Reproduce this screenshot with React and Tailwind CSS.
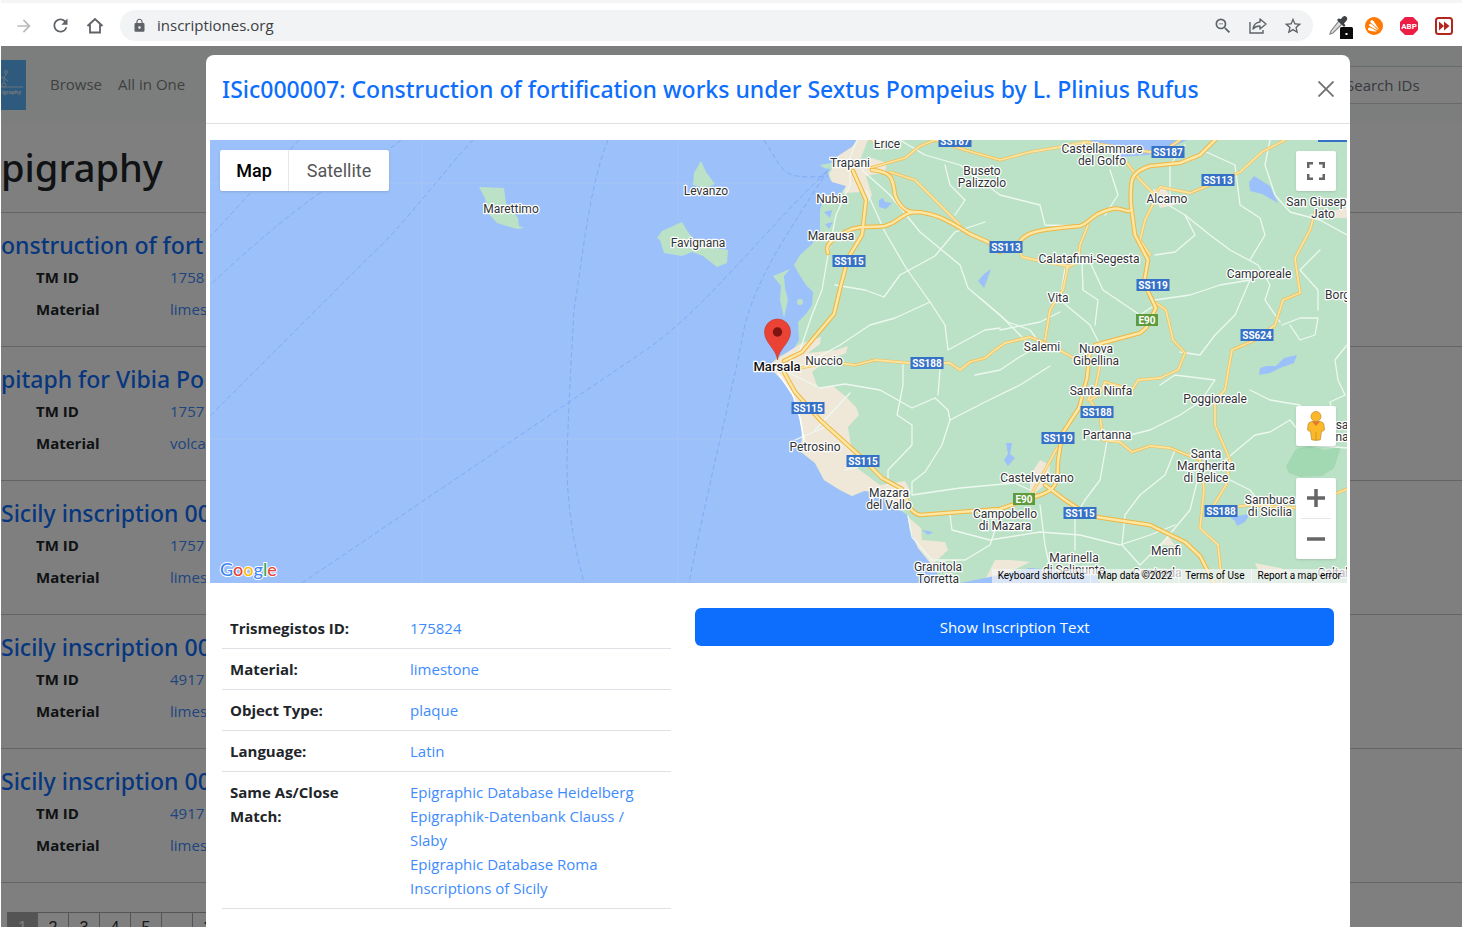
import { MdArrowForward, MdRefresh, MdLock, MdZoomOut, MdStarBorder } from 'react-icons/md';

const records = [
    { title: 'onstruction of fort', tm: '1758', material: 'limes' },
    { title: 'pitaph for Vibia Po', tm: '1757', material: 'volca' },
    { title: 'Sicily inscription 00', tm: '1757', material: 'limes' },
    { title: 'Sicily inscription 00', tm: '4917', material: 'limes' },
    { title: 'Sicily inscription 00', tm: '4917', material: 'limes' },
];

const details = [
    { label: 'Trismegistos ID:', links: ['175824'] },
    { label: 'Material:', links: ['limestone'] },
    { label: 'Object Type:', links: ['plaque'] },
    { label: 'Language:', links: ['Latin'] },
    {
        label: 'Same As/Close Match:',
        links: [
            'Epigraphic Database Heidelberg',
            'Epigraphik-Datenbank Clauss / Slaby',
            'Epigraphic Database Roma',
            'Inscriptions of Sicily',
        ],
    },
];

// map coordinates: x, y of the centre of the first line
const places = [
    [887, 144, 'Erice'],
    [850, 163, 'Trapani'],
    [706, 191, 'Levanzo'],
    [511, 209, 'Marettimo'],
    [832, 199, 'Nubia'],
    [831, 236, 'Marausa'],
    [698, 243, 'Favignana'],
    [982, 171, 'Buseto', 'Palizzolo'],
    [1102, 149, 'Castellammare', 'del Golfo'],
    [1167, 199, 'Alcamo'],
    [1323, 202, 'San Giuseppe', 'Jato'],
    [1089, 259, 'Calatafimi-Segesta'],
    [1259, 274, 'Camporeale'],
    [1341, 295, 'Borgo'],
    [1058, 298, 'Vita'],
    [1042, 347, 'Salemi'],
    [1096, 349, 'Nuova', 'Gibellina'],
    [824, 361, 'Nuccio'],
    [1101, 391, 'Santa Ninfa'],
    [1215, 399, 'Poggioreale'],
    [1107, 435, 'Partanna'],
    [815, 447, 'Petrosino'],
    [1206, 454, 'Santa', 'Margherita', 'di Belice'],
    [1037, 478, 'Castelvetrano'],
    [889, 493, 'Mazara', 'del Vallo'],
    [1005, 514, 'Campobello', 'di Mazara'],
    [1270, 500, 'Sambuca', 'di Sicilia'],
    [1342, 425, 'sa', 'na'],
    [1166, 551, 'Menfi'],
    [1074, 558, 'Marinella', 'di Selinunte'],
    [1157, 573, 'Contrada'],
    [938, 567, 'Granitola', 'Torretta'],
    [1338, 573, 'Caltabe'],
];

const shields = [
    [955, 141, 'SS187'],
    [1168, 152, 'SS187'],
    [1218, 180, 'SS113'],
    [1006, 247, 'SS113'],
    [849, 261, 'SS115'],
    [1153, 285, 'SS119'],
    [1147, 320, 'E90'],
    [1257, 335, 'SS624'],
    [927, 363, 'SS188'],
    [808, 408, 'SS115'],
    [863, 461, 'SS115'],
    [1097, 412, 'SS188'],
    [1058, 438, 'SS119'],
    [1024, 499, 'E90'],
    [1080, 513, 'SS115'],
    [1221, 511, 'SS188'],
];

const ferries = [
    'M299 140L209 238',
    'M401 140Q390 150 340 180T209 286',
    'M473 140C440 175 400 230 370 256L209 417',
    'M608 140C590 185 585 240 574 310C570 380 567 440 567 470C568 520 578 560 584 583',
    'M302 583L640 354C700 315 760 235 828 170',
    'M764 140C785 172 780 180 828 176',
    'M828 170C790 230 750 285 742 340C730 400 705 500 689 583',
];

const minorRoads = [
    'M857 140L850 158L850 185L836 215L828 255L822 290L812 315L800 350L786 360',
    'M862 170L890 195L920 232L960 265L968 288L1000 315L1025 340L1030 345',
    'M866 190L885 232L906 268L930 302L945 325L948 350L985 330L1000 328',
    'M930 302L895 318L870 325L840 345L800 367',
    'M835 285L865 290L884 297L900 275L935 256L955 232L985 222',
    'M895 137L925 155L960 165L1000 195L1040 205L1045 225L1080 226',
    'M945 165L950 185L965 200L955 215',
    'M1110 170L1118 195L1105 215',
    'M1202 150L1235 165L1240 205L1260 218L1265 235L1250 260',
    'M1270 140L1265 165L1275 195L1290 212L1320 220L1347 235',
    'M1160 200L1185 215L1210 235L1230 250L1258 265L1270 285L1265 300L1280 322',
    'M1170 195L1170 165L1185 145',
    'M1155 300L1190 295L1220 285L1250 280L1235 315L1215 335L1200 355L1180 352',
    'M1155 255L1175 252L1195 235L1185 215',
    'M1065 268L1060 300L1090 325L1100 345',
    'M1090 262L1103 290L1140 315L1152 307',
    'M1082 262L1083 290L1098 300L1095 325',
    'M980 298L1008 322L1030 330L1042 346',
    'M1000 330L1040 322L1060 312',
    'M787 372L820 388L845 384L880 390L912 408L935 398L948 410L950 420L985 402L1020 385L1050 366',
    'M950 420L942 445L925 472L912 482L912 495L960 488L1015 483L1030 490',
    'M903 365L903 385L897 415L912 425L912 445L888 470L888 485',
    'M940 370L938 395',
    'M908 516L912 537L932 560L965 560L990 545L995 530',
    'M950 515L952 530L990 540L1040 532L1080 535L1120 545L1150 535L1175 525',
    'M1040 505L1045 545L1050 568',
    'M1075 510L1075 550',
    'M1107 441L1100 480L1085 500L1078 512',
    'M1110 440L1150 430L1180 415L1200 402L1215 380L1175 375L1160 385',
    'M1175 450L1165 475L1140 495L1125 515L1122 545L1140 565L1165 540L1190 510L1200 470',
    'M1230 480L1250 490L1262 505',
    'M1225 460L1255 435L1270 432L1290 420L1310 445L1347 448',
    'M1250 390L1270 400L1300 405L1310 425',
    'M1347 345L1335 360L1338 380L1345 395L1330 402L1332 410',
    'M1282 325L1300 318L1318 318L1315 335L1300 340L1290 325',
    'M1320 250L1300 270L1318 290L1318 310',
    'M1040 345L1018 358L1000 370L975 375',
    'M815 430L850 393M795 440L830 425M845 470L858 467',
];

const yellowRoads = [
    'M870 168L905 158L920 146L935 140L965 150L1000 160L1030 152L1060 147L1085 142',
    'M890 172L915 180L930 195L945 210L960 225',
    'M1085 142L1150 152L1165 150L1180 140',
    'M1127 163L1140 180L1155 195L1160 187L1190 193L1215 183L1240 172L1262 152L1285 140',
    'M1155 200L1145 220L1140 240L1150 255',
    'M1018 247L1022 257L1045 262L1068 266L1063 290L1050 310L1045 340',
    'M1088 225L1080 245L1078 262L1066 268',
    'M800 368L830 362L855 365L875 360L910 363L950 363L960 370L970 362L985 358L995 350L1005 343L1030 337L1050 345L1072 357L1098 365',
    'M1156 303L1166 310L1173 340L1185 353L1178 370L1160 378L1138 380L1132 390L1105 382L1099 395L1090 400L1100 415L1103 440L1120 442L1132 452L1150 446L1170 448L1200 460L1204 490L1200 528L1218 545L1222 583',
    'M1315 212L1310 230L1295 258L1300 293L1283 300L1275 325L1255 340L1232 350L1228 372L1225 390L1215 400L1215 425L1230 460L1226 485L1212 508',
    'M1225 508L1250 505L1300 508L1347 489',
    'M1057 448L1045 470L1030 497',
    'M1100 365L1096 385L1088 400',
    'M868 137L878 145L895 137',
];

const highways = [
    'M872 170C892 172 893 178 895 195C900 208 908 212 914 212',
    'M828 253C824 242 835 240 845 232C860 224 875 228 885 226C900 222 900 214 914 212C935 212 950 222 970 234L988 242L1000 252',
    'M1018 244C1025 232 1035 230 1080 226C1092 222 1090 214 1112 209C1122 206 1125 214 1132 210',
    'M1215 140L1200 155L1180 163L1150 166C1130 172 1130 180 1131 205L1135 235L1148 260L1144 283L1156 308L1146 328L1140 333L1095 345',
    'M1090 350L1087 378L1079 408L1062 434L1058 462C1058 485 1055 490 1040 495L1000 509L920 515C908 512 908 500 902 489L882 478L861 457L820 420L795 392L784 372',
    'M784 361L802 352L834 314L841 285L848 258L862 235L866 200L853 171',
    'M1045 485L1065 500L1090 516L1150 525L1185 542L1200 556L1214 583',
];

function Shield({ x, y, name }) {
    const width = name === 'E90' ? 22 : 33;
    return (
        <g>
            <rect x={x - width / 2} y={y - 6} width={width} height="12" fill={name === 'E90' ? '#5f9b3c' : '#3571c6'} />
            <text x={x} y={y + 4} textAnchor="middle" fontSize="10" fontWeight="700" fill="#fff">
                {name}
            </text>
        </g>
    );
}

function MapDrawing() {
    return (
        <svg
            viewBox="210 140 1137 443"
            preserveAspectRatio="xMidYMid slice"
            className="block w-full font-['Roboto',sans-serif]"
        >
            <rect x="210" y="140" width="1137" height="443" fill="#9cc0f9" />
            <path d="M422 140V583M678 140V583M210 183H820M210 439H800" stroke="#a6c5f5" fill="none" />

            {/* ferry lines */}
            <g fill="none" stroke="#7facf5" strokeWidth="1" strokeDasharray="5 3">
                {ferries.map((d) => (
                    <path key={d} d={d} />
                ))}
            </g>

            {/* islands */}
            <g fill="#bbe2c6">
                <path d="M479 187L504 188L506 203L518 218L519 226L524 228L517 229L497 223L488 213L485 198Z" />
                <path d="M701 161L706 172L715 184L705 188L693 185L694 173Z" />
                <path d="M657 238L662 231L682 222L688 232L700 246L728 250L727 263L717 267L703 256L692 252L682 256L664 253L660 240Z" />
                <path d="M773 276L790 269L784 276L785 288L788 300L784 318L780 300L781 286Z" />
                <circle cx="800" cy="302" r="3" />
            </g>
            <path d="M820 165L832 163L836 170L824 168Z" fill="#bbe2c6" />

            {/* mainland */}
            <path
                d="M857 140L852 147L838 156L834 166L828 172L830 180L846 186L840 194L824 198L820 210L820 232L812 244L800 255L794 265L799 274L806 285L813 292L812 305L806 314L798 322L799 340L793 350L778 357L768 366L780 378L790 390L796 402L801 420L802 440L801 452L815 463L824 480L840 490L852 496L864 491L880 492L893 505L907 515L910 530L918 548L932 565L943 583H1347V140Z"
                fill="#bbe2c6"
            />
            <g fill="#efe8d8">
                <path d="M857 140L852 147L838 156L834 166L829 174L832 182L846 186L843 193L862 192L868 203L872 195L866 176L885 172L887 163L872 158L860 160L868 140Z" />
                <path d="M768 366L780 357L800 344L821 337L820 344L808 353L836 350L848 346L846 353L825 362L812 372L818 388L833 386L845 396L856 407L859 415L848 427L850 440L857 468L880 485L905 481L911 492L905 508L893 505L880 492L864 491L852 496L840 490L824 480L815 463L801 452L802 430L796 402L784 382Z" />
                <path d="M908 517L921 528L922 540L945 542L948 550L932 565L918 548L910 530Z" />
                <path d="M985 580L995 560L1010 560L1030 562L1010 572Z" />
                <path d="M1150 190L1165 188L1175 205L1160 208Z" />
                <path d="M1030 475L1040 460L1050 465L1048 482L1030 497Z" />
                <path d="M1160 545L1168 536L1176 546Z" />
                <path d="M1255 563L1280 568L1300 575L1260 575Z" />
                <path d="M1335 210L1347 208V218H1335Z" />
            </g>
            <path d="M1286 466L1296 449L1310 446L1325 450L1341 447L1334 468L1322 476L1300 477L1289 473Z" fill="#a2d8b2" />

            {/* water */}
            <g fill="#9cc0f9">
                <path d="M1090 140H1187L1170 148L1148 155L1120 157L1108 150Z" />
                <path d="M829 183L845 186L840 194L828 190Z" />
                <path d="M879 200L883 198L885 202L892 203L886 209L879 207Z" />
                <path d="M824 212L832 210L830 218ZM825 224L833 222L829 229Z" />
                <path d="M978 281L984 274L991 269L987 280L984 288Z" />
                <path d="M1249 182L1254 176L1262 181L1270 186L1278 203L1262 194L1250 191Z" />
                <path d="M1259 375L1260 368L1266 366L1276 366L1284 358L1297 355L1294 363L1280 368L1270 373Z" />
                <path d="M1006 443L1012 443L1010 454L1015 458L1008 466L1004 460L1008 454Z" />
                <path d="M1230 517L1250 514L1245 522L1237 526L1235 521Z" />
                <path d="M922 530L933 532L928 535Z" />
                <path d="M960 583L985 578L1030 568L1095 573L1100 583Z" />
            </g>

            <g fill="none" strokeLinejoin="round" strokeLinecap="round">
                <g stroke="#eef8f0" strokeWidth="1.3">
                    {minorRoads.map((d) => (
                        <path key={d} d={d} />
                    ))}
                </g>
                <path d="M778 373L793 395L800 418L804 440" stroke="#fff" strokeWidth="1.5" />
                <g stroke="#f2bd52" strokeWidth="3">
                    {yellowRoads.map((d) => (
                        <path key={d} d={d} />
                    ))}
                </g>
                <g stroke="#fbe3a0" strokeWidth="1.8">
                    {yellowRoads.map((d) => (
                        <path key={d} d={d} />
                    ))}
                </g>
                <g stroke="#f0b541" strokeWidth="4.5">
                    {highways.map((d) => (
                        <path key={d} d={d} />
                    ))}
                </g>
                <g stroke="#fce7a4" strokeWidth="2.5">
                    {highways.map((d) => (
                        <path key={d} d={d} />
                    ))}
                </g>
            </g>

            {shields.map(([x, y, name]) => (
                <Shield key={`${x}-${y}`} x={x} y={y} name={name} />
            ))}
            <rect x="1318" y="136" width="29" height="6" fill="#3571c6" />

            {/* labels */}
            <g fontSize="12" fill="#2f3336" stroke="#fff" strokeWidth="2.5" strokeLinejoin="round" paintOrder="stroke" textAnchor="middle">
                {places.map(([x, y, ...lines]) => (
                    <text key={`${x}-${y}`} x={x} y={y + 4}>
                        {lines.map((line, i) => (
                            <tspan key={line} x={x} dy={i === 0 ? 0 : 12}>
                                {line}
                            </tspan>
                        ))}
                    </text>
                ))}
                <text x="777" y="371" fontSize="13" fontWeight="500" fill="#111">
                    Marsala
                </text>
            </g>

            {/* marker */}
            <path
                d="M777.500 360C776.500 349 764.500 343 764.500 332A13 13 0 0 1 790.500 332C790.500 343 778.500 349 777.500 360Z"
                fill="#ea4335"
                stroke="#c5372c"
                strokeWidth="0.600"
            />
            <circle cx="777.500" cy="332" r="4.700" fill="#7d1410" />

            <text x="220" y="576" fontSize="18" fontWeight="500" stroke="#fff" strokeWidth="2" paintOrder="stroke" fontFamily="Lato">
                <tspan fill="#4285f4">G</tspan>
                <tspan fill="#ea4335">o</tspan>
                <tspan fill="#fbbc05">o</tspan>
                <tspan fill="#4285f4">g</tspan>
                <tspan fill="#34a853">l</tspan>
                <tspan fill="#ea4335">e</tspan>
            </text>
        </svg>
    );
}

function MapPanel() {
    return (
        <div className="relative mr-[3px] ml-1 overflow-hidden font-['Roboto',sans-serif]">
            <MapDrawing />

            <div className="absolute top-[10px] left-[10px] flex h-[41px] rounded-xs bg-white text-lg shadow">
                <button type="button" className="w-[69px] border-r border-gray-200 font-medium text-black">
                    Map
                </button>
                <button type="button" className="w-[100px] text-[#565656]">
                    Satellite
                </button>
            </div>

            <button
                type="button"
                aria-label="Toggle fullscreen view"
                className="absolute top-[11px] right-[11px] flex size-10 items-center justify-center rounded-xs bg-white shadow"
            >
                <svg viewBox="0 0 18 18" className="size-[18px]" fill="none" stroke="#666" strokeWidth="2.500">
                    <path d="M1.250 6V1.250H6M12 1.250H16.750V6M16.750 12V16.750H12M6 16.750H1.250V12" />
                </svg>
            </button>

            <div className="absolute right-[11px] bottom-6 flex flex-col gap-8">
                <button
                    type="button"
                    aria-label="Drag Pegman onto the map"
                    className="flex size-10 items-center justify-center rounded-xs bg-white shadow"
                >
                    <svg viewBox="0 0 18 30" className="h-[30px] w-[18px]" stroke="#b98a2f" strokeWidth="0.700">
                        <path
                            d="M4.500 10.500Q1.500 11 1 14L0.600 19Q1.500 20.500 3.500 20L4.700 28.800Q9 30 13.300 28.800L14.500 20Q16.500 20.500 17.400 19L17 14Q16.500 11 13.500 10.500Z"
                            fill="#fbb829"
                        />
                        <path d="M5 10.500L9 15L13 10.500Z" fill="#e8762c" stroke="none" />
                        <path d="M9 21V29" fill="none" />
                        <circle cx="9" cy="5.500" r="5" fill="#fbb829" />
                    </svg>
                </button>

                <div className="flex flex-col items-center rounded-xs bg-white shadow">
                    <button type="button" aria-label="Zoom in" className="flex size-10 items-center justify-center">
                        <svg viewBox="0 0 18 18" className="size-[18px]" stroke="#666" strokeWidth="3.500">
                            <path d="M9 0V18M0 9H18" />
                        </svg>
                    </button>
                    <div className="h-px w-[30px] bg-gray-200" />
                    <button type="button" aria-label="Zoom out" className="flex size-10 items-center justify-center">
                        <svg viewBox="0 0 18 18" className="size-[18px]" stroke="#666" strokeWidth="3.500">
                            <path d="M0 9H18" />
                        </svg>
                    </button>
                </div>
            </div>

            <div className="absolute right-0 bottom-0 flex h-[14px] items-center divide-x divide-white/60 bg-[#f5f5f5]/70 text-[10px] leading-[14px] text-black">
                <button type="button" className="px-[6px]">
                    Keyboard shortcuts
                </button>
                <span className="px-[6px]">Map data ©2022</span>
                <a href="#terms" className="px-[6px]">
                    Terms of Use
                </a>
                <a href="#report" className="px-[6px]">
                    Report a map error
                </a>
            </div>
        </div>
    );
}

function BrowserBar() {
    return (
        <div className="flex h-[46px] shrink-0 items-center border-t-[3px] border-[#f5f5f5] bg-white pt-[2px] pr-[9px] pl-[13px] text-[#5f6368]">
            <button type="button" aria-label="Forward" className="text-[#b8babc]">
                <MdArrowForward size={20} />
            </button>
            <button type="button" aria-label="Reload" className="ml-4">
                <MdRefresh size={21} />
            </button>
            <button type="button" aria-label="Home" className="ml-[15px]">
                <svg viewBox="0 0 18 18" className="size-[18px]" fill="none" stroke="currentColor" strokeWidth="1.800">
                    <path d="M1.500 9L9 2L16.500 9M4 7.500V15.500H14V7.500" />
                </svg>
            </button>

            <div className="ml-4 flex h-[31px] flex-1 items-center rounded-full bg-[#f1f3f4] pr-[10px] pl-3">
                <MdLock size={15} />
                <input
                    aria-label="Address"
                    defaultValue="inscriptiones.org"
                    className="ml-[10px] min-w-0 flex-1 bg-transparent text-[15px] text-[#3c4043] outline-none"
                />
                <div className="flex items-center gap-4">
                    <button type="button" aria-label="Zoom">
                        <MdZoomOut size={20} />
                    </button>
                    <button type="button" aria-label="Share">
                        <svg viewBox="0 0 18 18" className="size-[18px]" fill="none" stroke="currentColor" strokeWidth="1.400">
                            <path d="M1 5V16H14V13" />
                            <path d="M11 2L17 7L11 12V9Q6.500 9 4 12Q5 5.500 11 5Z" strokeLinejoin="round" />
                        </svg>
                    </button>
                    <button type="button" aria-label="Bookmark">
                        <MdStarBorder size={20} />
                    </button>
                </div>
            </div>

            <div className="ml-[14px] flex items-center gap-4">
                <button type="button" aria-label="Color picker">
                    <svg viewBox="0 0 26 26" className="size-[26px]">
                        <path d="M4 18L3 21L6 20L15 11L12 8Z" fill="#ddd" stroke="#888" strokeWidth="1.200" />
                        <path d="M10 7L17 14L18.500 12.500L17 10.500L20 7Q21 4 18 3Q16 2.500 14 6L11.500 5.500Z" fill="#3f4245" />
                        <rect x="13" y="14" width="13" height="13" rx="1.500" fill="#0c0c0c" />
                        <rect x="18.500" y="20" width="2" height="2" fill="#fff" />
                    </svg>
                </button>
                <button type="button" aria-label="Antivirus" className="-ml-1">
                    <svg viewBox="0 0 18 18" className="size-[18px]">
                        <circle cx="9" cy="9" r="9" fill="#ff7800" />
                        <path d="M5.500 4Q7 2 8.500 4L14.500 13Q12 11 5.500 5.500ZM4 8Q4.500 6 7 7.500L13.500 13.500Q10 12.500 4.500 9ZM3 12Q3 9.800 6 10.800L12 14.300Q7 15 3 13Z" fill="#fff" />
                    </svg>
                </button>
                <button type="button" aria-label="Ad blocker">
                    <svg viewBox="0 0 20 20" className="size-5">
                        <path d="M6 1H14L19 6V14L14 19H6L1 14V6Z" fill="#ed1e45" />
                        <text x="10" y="13" textAnchor="middle" fontSize="8" fontWeight="700" fill="#fff" fontFamily="Roboto">
                            ABP
                        </text>
                    </svg>
                </button>
                <button type="button" aria-label="Fast forward">
                    <svg viewBox="0 0 18 18" className="size-[18px]">
                        <rect x="1" y="1" width="16" height="16" rx="2.500" fill="#fff" stroke="#b3261e" strokeWidth="2" />
                        <path d="M4 4.500L9 9L4 13.500ZM9 4.500L14.500 9L9 13.500Z" fill="#b3261e" />
                    </svg>
                </button>
            </div>
        </div>
    );
}

function ResultsPage() {
    return (
        <div className="h-full overflow-hidden bg-white">
            <nav className="flex h-[77px] items-center overflow-hidden bg-[#f8fcfa] text-[15px] text-[#7f8182]">
                <a href="#home" aria-label="Home" className="block h-[50px] w-[25px] bg-[#5ab4fa]">
                    <svg viewBox="0 0 25 50" className="h-full w-full" fill="none" stroke="#cfe6fb" strokeWidth="1">
                        <circle cx="5" cy="12" r="1.500" />
                        <circle cx="3" cy="25" r="2" />
                        <path d="M5 14L3 18L0 17M3 18L7 21M3 18V23M0 27H22" />
                        <text x="20" y="34" textAnchor="end" fontSize="5" fontWeight="700" fill="#e6f2fd" stroke="none">
                            igraphy
                        </text>
                    </svg>
                </a>
                <a href="#browse" className="ml-6">
                    Browse
                </a>
                <a href="#all" className="ml-4">
                    All in One
                </a>
                <input
                    type="search"
                    aria-label="Search IDs"
                    placeholder="Search IDs"
                    className="ml-auto h-[38px] w-[128px] border-y border-[#ced4da] bg-white px-3 placeholder:text-[#6c757d]"
                />
            </nav>

            <h1 className="mt-4 h-[74px] border-b border-[#c8c8c8] pt-1 font-['Noto_Sans',sans-serif] text-[38px] leading-[48px] font-medium text-[#212529]">
                pigraphy
            </h1>

            {records.map((record, i) => (
                <section key={i} className="h-[134px] border-b border-[#c8c8c8] pt-4">
                    <h2 className="font-['Noto_Sans',sans-serif] text-[23px] leading-8 font-medium whitespace-nowrap text-[#0d6efd]">
                        <a href="#record">{record.title}</a>
                    </h2>
                    <dl className="grid grid-cols-[134px_1fr] pl-[35px] text-[15px] leading-8">
                        <dt className="font-bold text-[#212529]">TM ID</dt>
                        <dd className="text-[#3d8bfd]">{record.tm}</dd>
                        <dt className="font-bold text-[#212529]">Material</dt>
                        <dd className="text-[#3d8bfd]">{record.material}</dd>
                    </dl>
                </section>
            ))}

            <div className="mt-[29px] ml-[6px] flex font-['Liberation_Sans',sans-serif] text-base text-[#333]">
                {['1', '2', '3', '4', '5', '', '2'].map((page, i) => (
                    <button
                        key={i}
                        type="button"
                        className={
                            i === 0
                                ? 'h-8 w-[31px] border border-[#aaa] bg-[#a8a8a8] text-white'
                                : 'h-8 w-[31px] border border-l-0 border-[#aaa]'
                        }
                    >
                        {page}
                    </button>
                ))}
            </div>
        </div>
    );
}

function InscriptionModal() {
    return (
        <div
            role="dialog"
            aria-labelledby="modal-title"
            className="mt-2 mr-[112px] ml-[205px] min-h-full rounded-lg bg-white"
        >
            <div className="flex h-[69px] items-center justify-between border-b border-[#dee2e6] px-4">
                <h2 id="modal-title" className="font-['Noto_Sans',sans-serif] text-[23px] font-medium text-[#0d6efd]">
                    ISic000007: Construction of fortification works under Sextus Pompeius by L. Plinius Rufus
                </h2>
                <button type="button" aria-label="Close">
                    <svg viewBox="0 0 16 16" className="size-4" stroke="#707070" strokeWidth="1.800">
                        <path d="M0.500 0.500L15.500 15.500M15.500 0.500L0.500 15.500" />
                    </svg>
                </button>
            </div>

            <div className="py-4">
                <MapPanel />

                <div className="mt-[25px] grid grid-cols-12 gap-6 px-4">
                    <div className="col-span-5">
                        <table className="w-full table-fixed text-[15px] leading-6">
                            <tbody>
                                {details.map((row) => (
                                    <tr key={row.label} className="border-b border-[#dee2e6] align-top">
                                        <th scope="row" className="w-[180px] py-2 pr-8 pl-2 text-left font-bold text-[#212529]">
                                            {row.label}
                                        </th>
                                        <td className="p-2">
                                            {row.links.map((link) => (
                                                <a key={link} href="#link" className="block text-[#3d8bfd]">
                                                    {link}
                                                </a>
                                            ))}
                                        </td>
                                    </tr>
                                ))}
                            </tbody>
                        </table>
                    </div>
                    <div className="col-span-7">
                        <button type="button" className="h-[38px] w-full rounded-md bg-[#0d6efd] text-[15px] text-white">
                            Show Inscription Text
                        </button>
                    </div>
                </div>
            </div>
        </div>
    );
}

export default function App() {
    return (
        <div className="flex h-screen flex-col overflow-hidden bg-white pr-[13px] pb-[10px] pl-px font-['Open_Sans',sans-serif]">
            <BrowserBar />
            <div className="relative min-h-0 flex-1 overflow-hidden">
                <ResultsPage />
                <div className="absolute inset-0 overflow-hidden bg-black/50 pt-px">
                    <InscriptionModal />
                </div>
            </div>
        </div>
    );
}
